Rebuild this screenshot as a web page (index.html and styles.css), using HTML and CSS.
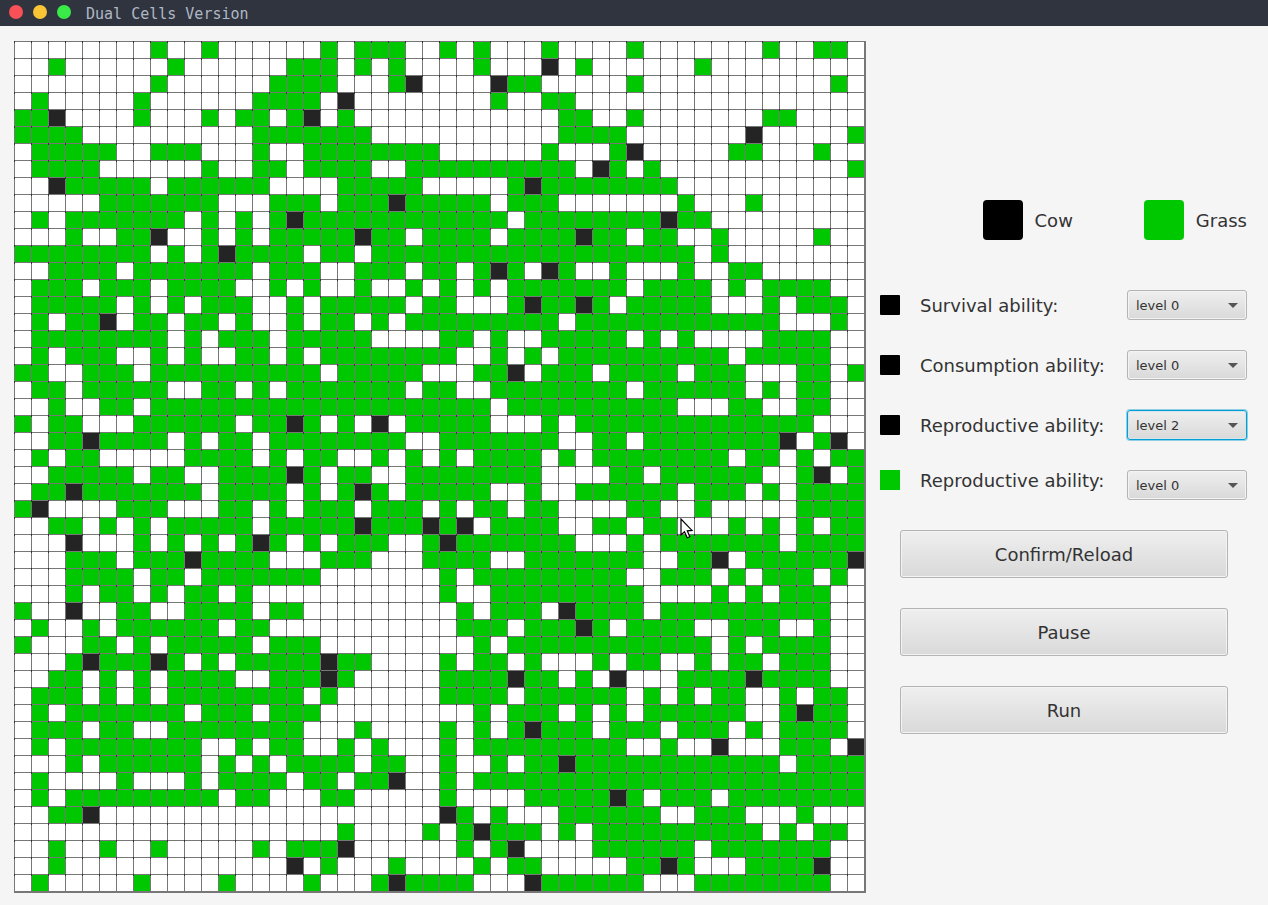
FILE: index.html
```html
<!DOCTYPE html>
<html lang="en">
<head>
<meta charset="utf-8">
<title>Dual Cells Version</title>
<link rel="stylesheet" href="styles.css">
</head>
<body>
<header class="titlebar">
  <span class="dot dot-close"></span>
  <span class="dot dot-min"></span>
  <span class="dot dot-max"></span>
  <h1 class="title">Dual Cells Version</h1>
</header>
<main class="content">
  <div class="board-wrap">
    <div class="board" id="board"></div>
    <svg class="cursor" width="14" height="22" viewBox="0 0 14 22" aria-hidden="true">
      <path d="M1 1 L1 17 L4.500 13.800 L7.200 19.800 L9.800 18.700 L7.300 12.800 L12 12.400 Z" fill="#fff" stroke="#000" stroke-width="1.200"/>
    </svg>
  </div>
  <section class="panel">
    <div class="legend">
      <div class="legend-item"><span class="chip cow"></span><span class="caption">Cow</span></div>
      <div class="legend-item"><span class="chip grass"></span><span class="caption">Grass</span></div>
    </div>
    <form class="settings">
      <div class="row">
        <span class="swatch cow"></span>
        <label class="name" for="survival">Survival ability:</label>
        <span class="combo"><select id="survival"><option>level 0</option><option>level 1</option><option>level 2</option></select></span>
      </div>
      <div class="row">
        <span class="swatch cow"></span>
        <label class="name" for="consumption">Consumption ability:</label>
        <span class="combo"><select id="consumption"><option>level 0</option><option>level 1</option><option>level 2</option></select></span>
      </div>
      <div class="row">
        <span class="swatch cow"></span>
        <label class="name" for="cow-repro">Reproductive ability:</label>
        <span class="combo active"><select id="cow-repro"><option>level 0</option><option>level 1</option><option selected>level 2</option></select></span>
      </div>
      <div class="row row-top">
        <span class="swatch grass square"></span>
        <label class="name" for="grass-repro">Reproductive ability:</label>
        <span class="combo"><select id="grass-repro"><option>level 0</option><option>level 1</option><option>level 2</option></select></span>
      </div>
    </form>
    <div class="actions">
      <button type="button">Confirm/Reload</button>
      <button type="button">Pause</button>
      <button type="button">Run</button>
    </div>
  </section>
</main>
<script src="board.js"></script>
</body>
</html>
```
FILE: styles.css
```css
* { box-sizing: border-box; }

body {
  margin: 0;
  min-height: 100vh;
  background: #f5f5f5;
  color: #333;
  font: 18px/24px "DejaVu Sans", sans-serif;
}

.titlebar {
  display: flex;
  align-items: center;
  gap: 10px;
  height: 26px;
  padding: 0 9px;
  background: #2f343f;
}
.dot { width: 14px; height: 14px; border-radius: 50%; margin-bottom: 2px; }
.dot-close { background: #fa5057; }
.dot-min { background: #f9c536; }
.dot-max { background: #39ea49; }
.title {
  margin: 0 0 0 5px;
  padding-top: 2px;
  color: #afb8c6;
  font: 15px/24px "DejaVu Sans Mono", monospace;
}

.content { display: flex; padding: 15px 21px 11px 14px; }

.board-wrap { position: relative; flex: none; }
.board {
  display: grid;
  grid-template-columns: repeat(50, 17px);
  grid-auto-rows: 17px;
  border: solid #777;
  border-width: 0 2px 2px 0;
  background: #fff;
}
.cell { border: solid #777; border-width: 1px 0 0 1px; }
.cell::before {
  content: "";
  display: block;
  width: 1px;
  height: 2px;
  margin: -1px 0 0 -1px;
  background: #333;
}
.cow { background: #000; }
.grass { background: #00c800; }
.cell.cow { background: #242424; }
.cursor { position: absolute; left: 666px; top: 477px; }

.panel { flex: 1; padding: 159px 0 0 14px; }

.legend { display: flex; justify-content: flex-end; gap: 71px; }
.legend-item { display: flex; align-items: center; gap: 12px; }
.caption { padding-top: 2px; }
.chip { width: 40px; height: 40px; border-radius: 4px; }

.settings { display: grid; gap: 30px; margin-top: 50px; }
.row { display: flex; align-items: center; gap: 20px; }
.row-top { align-items: flex-start; }
.row-top .name { line-height: 20px; padding-top: 1px; }
.swatch { flex: none; width: 20px; height: 20px; border-radius: 1px; }
.square { border-radius: 0; }
.name { flex: 1; padding-top: 2px; white-space: nowrap; }

.combo { display: grid; flex: none; width: 120px; align-items: center; }
.combo select {
  grid-area: 1 / 1;
  appearance: none;
  width: 100%;
  height: 30px;
  padding: 2px 8px 0;
  border: 1px solid #b4b4b4;
  border-radius: 3px;
  background: linear-gradient(#efefef, #d9d9d9);
  box-shadow: inset 0 0 0 1px #f3f3f3;
  color: #333;
  font: 13px/16px "DejaVu Sans", sans-serif;
}
.combo::after {
  content: "";
  grid-area: 1 / 1;
  justify-self: end;
  z-index: 1;
  margin-right: 9px;
  border: solid transparent;
  border-width: 5px 5px 0;
  border-top-color: #555;
  pointer-events: none;
}
.combo.active select {
  border-color: #039ed3;
  box-shadow: 0 0 0 1px #8fcfe6, inset 0 0 0 1px #d5e5ec;
}

.actions { display: grid; gap: 30px; margin: 30px 19px 0 20px; }
.actions button {
  height: 48px;
  padding: 2px 0 0;
  border: 1px solid #b4b4b4;
  border-radius: 3px;
  background: linear-gradient(#efefef, #d9d9d9);
  box-shadow: inset 0 0 0 1px #f3f3f3;
  color: #333;
  font: 18px/24px "DejaVu Sans", sans-serif;
}
```
FILE: board.js
```js
// One entry per row: occupied columns of the left half | right half (25 columns each).
// "a-b" is a run of grass, a "c" prefix marks a cow.
const rows = [
  "8 11 18 20-22 | 0 2 6 11 19 22-23",
  "2 9 16-18 20 22 | 2 c6 8 15",
  "8 15-18 22 c23 | c3 4-5 11 23",
  "1 7 14-17 c19 | 3 6-7",
  "0-1 c2 7 11 13-14 16 c17 19 | 7-8 11 19-20",
  "0-3 14-20 | 7-10 c18 24",
  "1-5 8-10 14 17-24 | 6 10 c11 17-18 22",
  "1-4 11 14-15 17-20 23-24 | 0-7 c9 10 12 24",
  "c2 3-7 9-14 19-23 | 4 c5 6-13",
  "5-11 15-17 19-21 c22 23-24 | 0-2 4-6 14 18",
  "1 3-9 11 13 15 c16 17-24 | 0-3 5-12 c13 14-15",
  "3 6-7 c8 11 13 15-19 c20 21-22 24 | 0-2 4-7 c8 9-10 12-13 16 22",
  "0-7 9 11 c12 13-16 18-19 21-24 | 0-14 16",
  "2-5 7-13 15-17 20-22 24 | 0 2 c3 4 c6 7 10 14 17-18",
  "1-3 5-7 9-12 15 17 20 23 | 0 2 4-10 12-15 17 19-22",
  "1-5 7 9 11-13 16 18-22 24 | 0 4 c5 6-7 c8 9 11-15 19 21-23",
  "1 3-4 c5 7-8 10-11 13 16 18-19 21 23-24 | 0-6 8-19 23",
  "1-8 10 12-14 16-20 | 0-1 3 6-10 12 14 19-22",
  "1 3-5 8 10 13-14 16 18-24 | 0 3 5 7-16 18-22",
  "0-1 4-6 8-17 19-23 | 2-3 c4 6-8 10-13 15-17 21-22 24",
  "1-2 4-8 11-12 14 16-22 24 | 0 3-10 12-17 19 21-22",
  "2 5-6 8-24 | 0-2 4-13 17-18 21-22",
  "0 2-3 7-12 14-15 c16 17 19 c21 23-24 | 0-2 6 8-21",
  "2-3 c4 5-8 10 12-13 15-22 | 0-6 9-10 12-19 c20 22 c23",
  "1 3-4 10-13 15 17-18 21 23 | 0 2-5 7 9-16 18-19 21 23-24",
  "2-6 8-9 12-15 c16 17 19-20 23-24 | 0-5 10-11 13-18 21 c22 24",
  "1-2 c3 4-10 12-15 17 19 c20 21 23-24 | 0-2 5 8-13 15-17 19 21-24",
  "0 c1 6-8 12-13 15 17-19 21-23 | 0 2-3 5-6 11-12 15 21-24",
  "2-3 5 7 9-13 15-19 c20 21-23 c24 | 0 c1 3-6 9-10 12-13 17 19 21 23-24",
  "c3 7 9 11 13 c14 15 17 19-21 24 | c0 1-7 11 13-19 21-24",
  "3-5 7-9 c10 11-14 18-20 24 | 0-2 5-11 14-15 c16 18-23 c24",
  "3-6 8-9 11-17 | 0 2-10 13-15 17 19-21 23",
  "3 5-6 8 10-11 13 | 0 3-11 16 18 20-22",
  "0 c3 6-7 10-13 15-16 | 1 3-5 c7 8-11 13-22",
  "1 4 6-11 13-14 | 1-3 5-7 c8 9 11-14 17-19 22",
  "0 4-5 7 9-13 15-17 | 2 4-15 17 19-22",
  "3 c4 5-7 c8 9 11 13-17 c18 19-20 | 0 2-3 5 9 11-12 15 17-18 20-22",
  "2-3 5 7 9-12 15-17 c18 19 | 0-3 c4 5-6 8 c10 14-17 c18 19-22",
  "1-3 5 7 9-16 18 | 0-3 5-10 12 14 16-17 20 22-23",
  "1 3-9 11-13 15-17 | 2 4-6 8 10 12-17 20 c21 22-23",
  "1-3 5-6 9-16 20 | 0 2 4 c5 6-8 10-12 14-16 18 20-23",
  "1 3-10 13 15-16 19 21 | 0 2-10 13 c16 20-22 c24",
  "3 5-10 12 14 16-19 21-22 | 0 3 5-6 c7 8-19 21-24",
  "1 6 10 12-15 17-18 20-21 c22 | 0 2-24",
  "1 3-11 13-14 18-19 | 0 5-9 c10 11 13-15 17-24",
  "2-3 c4 | c0 1 3 7-12 15-17 21",
  "19 24 | 1 c2 3-5 7 9-18 20 22-23",
  "2 5 8 14 16-18 c19 | 1 3 c4 9-14 16-22",
  "2 c16 18 22 | 2 4-5 11-12 c13 14 18-21 c22",
  "1 7 12 17 21 c22 23-24 | 0-1 c5 6-11 15-22"
];

const board = document.getElementById("board");
for (const row of rows) {
  const kinds = new Array(50).fill("");
  row.split("|").forEach((half, h) => {
    for (const token of half.trim().split(/\s+/)) {
      const cow = token[0] === "c";
      const [from, to = from] = token.replace("c", "").split("-").map(Number);
      for (let i = from; i <= to; i++) kinds[h * 25 + i] = cow ? " cow" : " grass";
    }
  });
  for (const kind of kinds) {
    const cell = document.createElement("div");
    cell.className = "cell" + kind;
    board.append(cell);
  }
}
```
